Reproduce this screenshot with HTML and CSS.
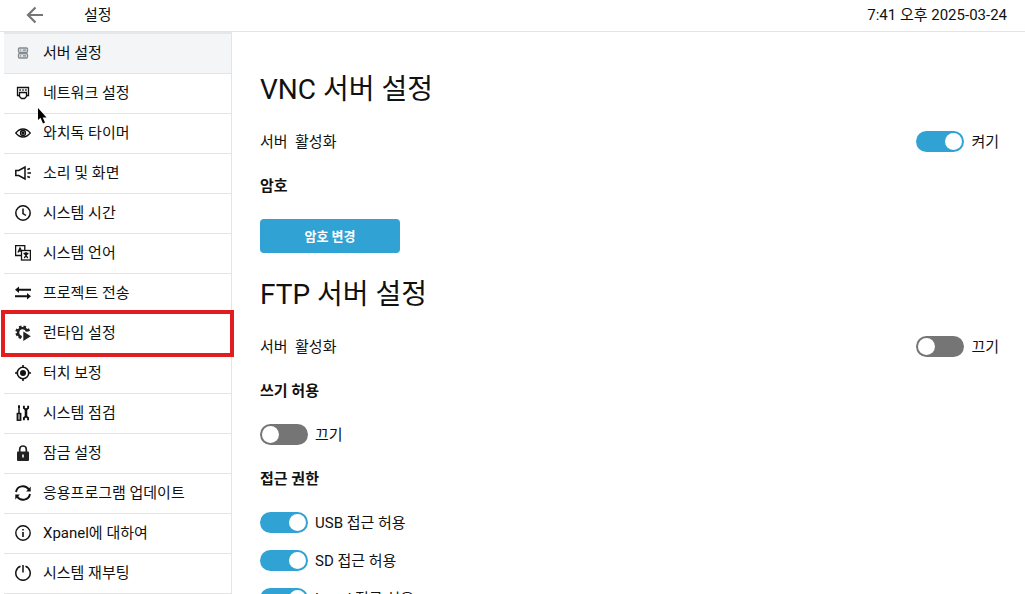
FILE: index.html
```html
<!DOCTYPE html>
<html lang="ko">
<head>
  <meta charset="UTF-8" />
  <meta name="viewport" content="width=device-width, initial-scale=1.0"/>
  <title>설정</title>
  <link rel="stylesheet" href="styles.css">
</head>
<body>
  <header class="topbar">
    <button class="back-btn" aria-label="뒤로">
      <svg width="18" height="18" viewBox="0 0 18 18" fill="none" stroke="#757575" stroke-width="2.200"><path d="M17 9H2M9.500 1.500L2 9L9.500 16.500"/></svg>
    </button>
    <h1>설정</h1>
    <time datetime="2025-03-24T19:41">7:41 오후 2025-03-24</time>
  </header>

  <div class="layout">
    <!-- Side menu -->
    <nav class="sidebar">
      <a href="#server" class="active">
        <svg class="icon" viewBox="0 0 16 16" fill="#dde1e4" stroke="#858b90" stroke-width="1.300"><rect x="3.500" y="3" width="9" height="4.300" rx="1"/><rect x="3.500" y="8.700" width="9" height="4.300" rx="1"/><path d="M5 5.200h1M5 10.800h1M8 5.200h3M8 10.800h3M4.500 7v2M11.500 7v2"/></svg>
        서버 설정
      </a>
      <a href="#network">
        <svg class="icon" viewBox="0 0 16 16" fill="none" stroke="#111" stroke-width="1.300"><path d="M4.500 10.500h-2v-8h11v8h-2"/><path d="M4.500 7.500h7v4l-2 2h-3l-2-2z"/><path d="M4.300 5h1.600M7.200 5h1.600M10.100 5h1.600"/></svg>
        네트워크 설정
      </a>
      <a href="#watchdog">
        <svg class="icon" viewBox="0 0 16 16" fill="none" stroke="#111" stroke-width="1.300"><path d="M.8 8Q4 4 8 4T15.200 8Q12 12 8 12T.8 8z"/><circle cx="8" cy="8" r="2.500"/><circle cx="8" cy="8" r="1" fill="#111"/></svg>
        와치독 타이머
      </a>
      <a href="#display">
        <svg class="icon" viewBox="0 0 16 16" fill="none" stroke="#111" stroke-width="1.500"><path d="M.8 5.500h3L10 2v12L3.800 10.500h-3z"/><path d="M12.500 8H16M12.300 4.500l2.700-1M12.300 11.500l2.700 1"/></svg>
        소리 및 화면
      </a>
      <a href="#time">
        <svg class="icon" viewBox="0 0 16 16" fill="none" stroke="#111" stroke-width="1.500"><circle cx="8" cy="8" r="7.200"/><path d="M8 3.500V8.500L11 10.500"/></svg>
        시스템 시간
      </a>
      <a href="#language">
        <svg class="icon" viewBox="0 0 16 16" fill="none" stroke="#111" stroke-width="1.300"><path d="M6 10.500H.6V.6h9.200V5"/><path d="M3 7.500L5 3l1.500 3M3.700 6h2.600"/><rect x="6.500" y="5.500" width="8.900" height="9.500"/><path d="M8.500 8.500h5M11 7v1.500M9.200 13l3.300-4.300M12.800 13L9.500 8.700"/></svg>
        시스템 언어
      </a>
      <a href="#transfer">
        <svg class="icon" viewBox="0 0 16 16" fill="#111"><path d="M4 1.500v2.300h12v2H4v2.300L0 4.800zM12 7.900v2.300H0v2h12v2.300l4-3.300z"/></svg>
        프로젝트 전송
      </a>
      <a href="#runtime" class="marked">
        <svg class="icon" viewBox="0 0 16 16" fill="none" stroke="#222"><path d="M6.500 12A4.500 4.500 0 1 1 12 6.500" stroke-width="2.300"/><path d="M5.800 3.600L5 .8M9.200 3.600L10 .8M3.600 6L.8 4.800M12 5.600L14.500 4.500M3.600 8.500L1 10M5.500 11L4.500 13.500" stroke-width="2.700"/><path d="M8.300 6.500v9.500l7.500-4.700z" fill="#222" stroke="none"/></svg>
        런타임 설정
      </a>
      <a href="#touch">
        <svg class="icon" viewBox="0 0 16 16" fill="none" stroke="#111" stroke-width="1.600"><circle cx="8" cy="8" r="5.700"/><circle cx="8" cy="8" r="3" fill="#111" stroke="none"/><path d="M8 0v2.500M8 13.500V16M0 8h2.500M13.500 8H16"/></svg>
        터치 보정
      </a>
      <a href="#check">
        <svg class="icon" viewBox="0 0 16 16" fill="none" stroke="#111"><path d="M4 .5v8" stroke-width="1.500"/><path d="M3 .5h2v2.500H3z" fill="#111" stroke="none"/><rect x="2.300" y="8.500" width="3.400" height="6.700" stroke-width="1.400"/><path d="M4 9v6"/><path d="M8.900 .8v2.200L11 4.800 13.100 3V.8M8.900 15.200V13l2.100-1.800 2.100 1.800v2.200" stroke-width="1.900"/><path d="M11 4.500v7" stroke-width="2.600"/></svg>
        시스템 점검
      </a>
      <a href="#lock">
        <svg class="icon" viewBox="0 0 16 16"><path d="M4.700 7V4.300a3.300 3.300 0 0 1 6.600 0V7" fill="none" stroke="#222" stroke-width="1.700"/><rect x="2" y="6.500" width="12" height="9.500" rx="1" fill="#222"/><path d="M7.200 9.500h1.600v3H7.200z" fill="#fff"/></svg>
        잠금 설정
      </a>
      <a href="#update">
        <svg class="icon" viewBox="0 0 16 16" fill="none" stroke="#111" stroke-width="1.900"><path d="M1 7A7 7 0 0 1 13.800 4.500M15 9A7 7 0 0 1 2.200 11.500"/><path d="M15.700 1.500v5h-4.500zM.3 14.500v-5h4.500z" fill="#111" stroke="none"/></svg>
        응용프로그램 업데이트
      </a>
      <a href="#about">
        <svg class="icon" viewBox="0 0 16 16" fill="none" stroke="#111" stroke-width="1.400"><circle cx="8" cy="8" r="7.200"/><path d="M8 4v1.600M8 7v5" stroke-width="1.600"/></svg>
        Xpanel에 대하여
      </a>
      <a href="#reboot">
        <svg class="icon" viewBox="0 0 16 16" fill="none" stroke="#111" stroke-width="1.500"><path d="M5.500 1.300A7.200 7.200 0 1 0 10.500 1.300M8 0v7.500"/></svg>
        시스템 재부팅
      </a>
    </nav>

    <!-- Server settings -->
    <main>
      <section>
        <h2>VNC 서버 설정</h2>
        <div class="row">
          <span>서버&nbsp; 활성화</span>
          <label class="switch"><input type="checkbox" checked>켜기</label>
        </div>
        <h3>암호</h3>
        <button class="primary-btn">암호 변경</button>
      </section>

      <section>
        <h2>FTP 서버 설정</h2>
        <div class="row">
          <span>서버&nbsp; 활성화</span>
          <label class="switch"><input type="checkbox">끄기</label>
        </div>
        <h3>쓰기 허용</h3>
        <label class="switch"><input type="checkbox">끄기</label>
        <h3>접근 권한</h3>
        <div class="switch-list">
          <label class="switch"><input type="checkbox" checked>USB 접근 허용</label>
          <label class="switch"><input type="checkbox" checked>SD 접근 허용</label>
          <label class="switch"><input type="checkbox" checked>Local 접근 허용</label>
        </div>
      </section>
    </main>
  </div>

  <!-- Pointer -->
  <svg class="pointer" width="10" height="16" viewBox="0 0 10 16"><path d="M0 0v12l2.500-2.300L5 15.500l2-1-2.300-5H8.500z" fill="#000"/></svg>
</body>
</html>
```

FILE: styles.css
```css
* {
  box-sizing: border-box;
}

body {
  font-family: Roboto, 'Noto Sans CJK KR', sans-serif;
  font-size: 15px;
  line-height: 22px;
  margin: 0;
  height: 100vh;
  display: flex;
  flex-direction: column;
  overflow: hidden;
  background: #fff;
  color: #111;
}

h1, h2, h3 {
  margin: 0;
}

.topbar {
  display: flex;
  align-items: center;
  height: 32px;
  flex-shrink: 0;
  padding: 0 18px 1px 26px;
  border-bottom: 1px solid #e4e4e4;
}

.topbar h1 {
  margin-left: 40px;
  font-size: 15px;
  font-weight: 400;
}

.topbar time {
  margin-left: auto;
}

.back-btn {
  display: flex;
  padding: 0;
  border: none;
  background: none;
  cursor: pointer;
}

.layout {
  display: flex;
  flex: 1;
  min-height: 0;
}

.sidebar {
  width: 228px;
  flex-shrink: 0;
  margin-left: 4px;
  border-top: 2px solid #e6e7e8;
}

.sidebar a {
  position: relative;
  display: flex;
  align-items: center;
  gap: 12px;
  height: 40px;
  padding: 0 11px 2px;
  border-right: 1px solid #e4e4e4;
  border-bottom: 1px solid #e4e4e4;
  color: #111;
  text-decoration: none;
}

.sidebar a.active {
  background: #f3f5f6;
}

.sidebar a.marked {
  z-index: 1;
}

.sidebar a.marked::after {
  content: "";
  position: absolute;
  inset: -4px -3px;
  border: 4px solid #e01e20;
}

.icon {
  width: 16px;
  height: 16px;
  flex-shrink: 0;
}

main {
  flex: 1;
  display: flex;
  flex-direction: column;
  gap: 21px;
  padding: 37px 26px 0 28px;
  overflow: hidden;
}

section {
  display: flex;
  flex-direction: column;
  align-items: flex-start;
  flex-shrink: 0;
  gap: 22px;
}

h2 {
  padding-top: 2px;
  font-size: 28px;
  line-height: 38px;
  font-weight: 400;
}

h3 {
  font-size: 15px;
  font-weight: 700;
}

.row {
  display: flex;
  justify-content: space-between;
  width: 100%;
}

.primary-btn {
  width: 140px;
  height: 34px;
  padding: 0 0 2px;
  border: none;
  border-radius: 4px;
  background: #30a2d4;
  color: #fff;
  font-family: inherit;
  font-size: 13px;
  font-weight: 700;
  cursor: pointer;
}

.switch-list {
  display: flex;
  flex-direction: column;
  gap: 16px;
}

.switch {
  display: flex;
  align-items: flex-start;
  gap: 7px;
}

.switch input {
  appearance: none;
  display: flex;
  width: 48px;
  height: 21px;
  margin: 0;
  padding: 2px;
  border-radius: 11px;
  background: #757575;
  cursor: pointer;
}

.switch input::before {
  content: "";
  width: 17px;
  height: 17px;
  border-radius: 50%;
  background: #fff;
}

.switch input:checked {
  justify-content: flex-end;
  background: #30a2d4;
}

.pointer {
  position: absolute;
  left: 38px;
  top: 108px;
}
```
